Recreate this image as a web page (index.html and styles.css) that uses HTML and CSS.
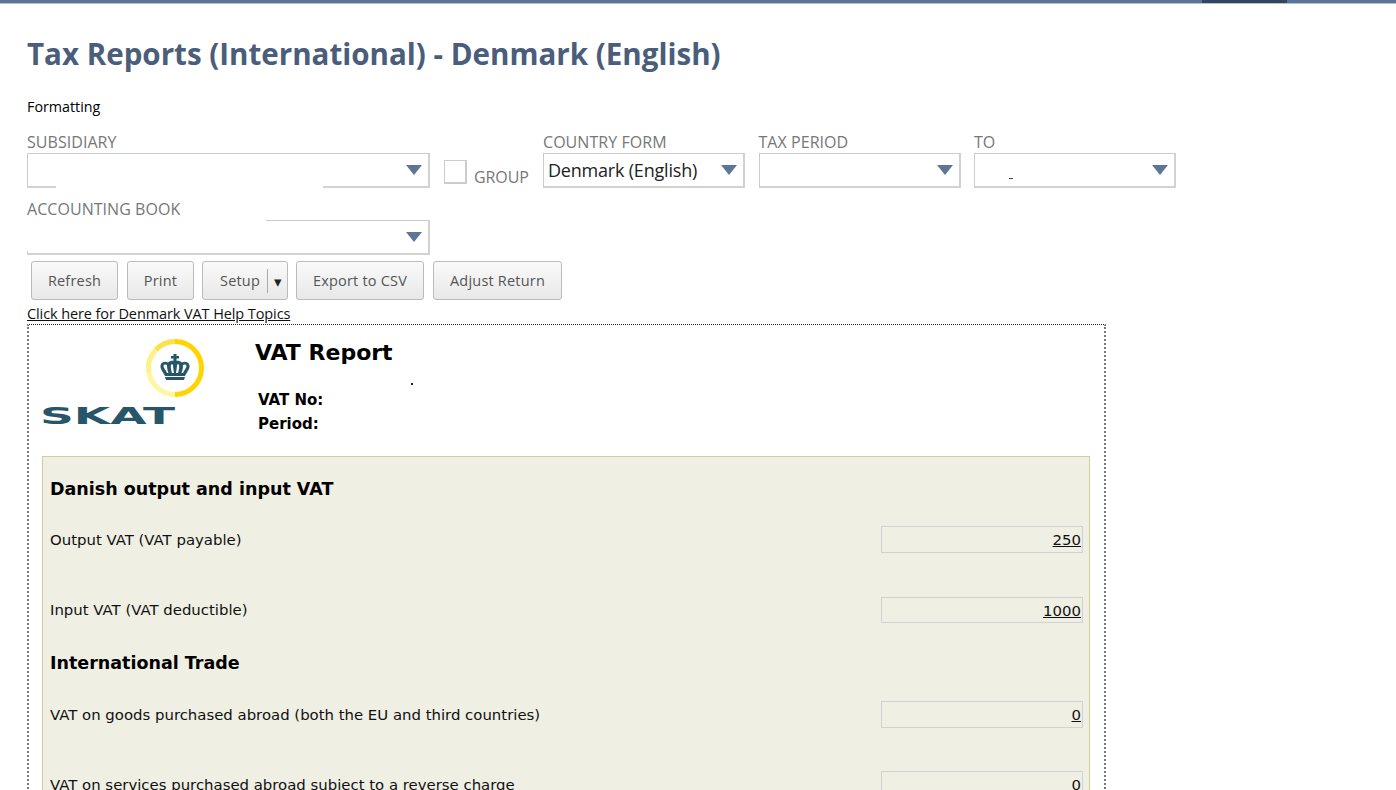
FILE: index.html
```html
<!DOCTYPE html>
<html lang="en">
<head>
    <meta charset="UTF-8">
    <meta name="viewport" content="width=device-width, initial-scale=1.0">
    <title>Tax Reports (International) - Denmark (English)</title>
    <link rel="stylesheet" href="styles.css">
</head>
<body>

<!-- top nav strip -->
<div class="topbar">
    <div class="topbar-active"></div>
</div>

<div class="page">
    <h1 class="title">Tax Reports (International) - Denmark (English)</h1>
    <div class="formatting">Formatting</div>

    <div class="filter-row">
        <div class="field field-wide">
            <label>SUBSIDIARY</label>
            <div class="select">
                <span class="mask mask-sub"></span>
                <span class="arrow"></span>
            </div>
        </div>
        <div class="group-check">
            <span class="checkbox"></span>
            <span class="group-label">GROUP</span>
        </div>
        <div class="field field-mid">
            <label>COUNTRY FORM</label>
            <div class="select">
                <span class="select-value">Denmark (English)</span>
                <span class="arrow"></span>
            </div>
        </div>
        <div class="field field-mid">
            <label>TAX PERIOD</label>
            <div class="select">
                <span class="arrow"></span>
            </div>
        </div>
        <div class="field field-mid">
            <label>TO</label>
            <div class="select">
                <span class="speck"></span>
                <span class="arrow"></span>
            </div>
        </div>
    </div>

    <div class="filter-row filter-row-2">
        <div class="field field-wide">
            <label>ACCOUNTING BOOK</label>
            <div class="select">
                <span class="mask mask-book-top"></span>
                <span class="mask mask-book-left"></span>
                <span class="arrow"></span>
            </div>
        </div>
    </div>

    <div class="buttons">
        <button class="btn btn-refresh">Refresh</button>
        <button class="btn btn-print">Print</button>
        <button class="btn btn-setup"><span class="setup-text">Setup</span><span class="setup-caret">▾</span></button>
        <button class="btn btn-export">Export to CSV</button>
        <button class="btn btn-adjust">Adjust Return</button>
    </div>

    <a class="help-link" href="#">Click here for Denmark VAT Help Topics</a>

    <div class="report">
        <div class="report-head">
            <svg class="logo" width="165" height="95" viewBox="42 335 165 95">
                <!-- ring, gold on the right fading to pale on the left -->
                <g fill="none" stroke-width="5">
                    <path d="M175 341.500 A26.500 26.500 0 0 1 175 394.500" stroke="#ffd400"/>
                    <path d="M175 394.500 A26.500 26.500 0 0 1 148.900 372.600" stroke="#fff6a0"/>
                    <path d="M148.900 372.600 A26.500 26.500 0 0 1 155.800 349.800" stroke="#fff08a"/>
                    <path d="M155.800 349.800 A26.500 26.500 0 0 1 175 341.500" stroke="#ffe04a"/>
                </g>
                <!-- crown -->
                <g fill="#27566b">
                    <rect x="173.500" y="354" width="3" height="8"/>
                    <rect x="171" y="356" width="8" height="2.500"/>
                    <path d="M165 377 L185 377 L184 380 L166 380 Z"/>
                    <path d="M165 376 C163 372 160 369 160.500 365.500 C161 362 165 361 168 362.500 C170 360.500 172 360.500 175 361 C178 360.500 180 360.500 182 362.500 C185 361 189 362 189.500 365.500 C190 369 187 372 185 376 Z"/>
                </g>
                <g fill="#fff">
                    <path d="M167 373 C166 370 163.500 368 163.500 366 C163.500 364.500 165.500 364 167 365 C167 368 167.500 370.500 168.500 373 Z"/>
                    <path d="M183 373 C184 370 186.500 368 186.500 366 C186.500 364.500 184.500 364 183 365 C183 368 182.500 370.500 181.500 373 Z"/>
                    <path d="M172 373 C171 370 170.500 367 171 364.500 L173 364.500 C173 367 173.500 370 174 373 Z"/>
                    <path d="M178 373 C179 370 179.500 367 179 364.500 L177 364.500 C177 367 176.500 370 176 373 Z"/>
                </g>
                <text class="logo-text" x="40" y="424" textLength="135" lengthAdjust="spacingAndGlyphs">SKAT</text>
            </svg>
            <div class="report-info">
                <h2 class="report-title">VAT Report</h2>
                <div class="redacted"><span class="dot"></span></div>
                <div class="meta">VAT No:</div>
                <div class="meta">Period:</div>
            </div>
        </div>

        <div class="panel">
            <h3 class="section section-first">Danish output and input VAT</h3>
            <div class="row row-a row-spaced">
                <span>Output VAT (VAT payable)</span>
                <div class="amount"><u>250</u></div>
            </div>
            <div class="row row-b">
                <span>Input VAT (VAT deductible)</span>
                <div class="amount"><u>1000</u></div>
            </div>
            <h3 class="section section-next">International Trade</h3>
            <div class="row row-a">
                <span>VAT on goods purchased abroad (both the EU and third countries)</span>
                <div class="amount"><u>0</u></div>
            </div>
            <div class="row row-a">
                <span>VAT on services purchased abroad subject to a reverse charge</span>
                <div class="amount"><u>0</u></div>
            </div>
        </div>
    </div>
</div>

</body>
</html>
```

FILE: styles.css
```css
html, body {
    margin: 0;
    padding: 0;
    height: 790px;
    overflow: hidden;
    background-color: #fff;
}

body {
    font-family: "Open Sans", Arial, sans-serif;
    color: #000;
}

.topbar {
    height: 3px;
    border-bottom: 1px solid #b4c0d2;
    background-color: #5a7397;
    display: flex;
    justify-content: flex-end;
    padding-right: 109px;
}

.topbar-active {
    width: 85px;
    background-color: #35455f;
}

.page {
    padding: 0 0 0 27px;
}

.title {
    margin: 30px 0 0;
    font-size: 29.550px;
    line-height: 40px;
    font-weight: 700;
    color: #4a5d7a;
}

.formatting {
    margin-top: 23px;
    font-size: 14.300px;
    line-height: 20px;
}

/* filter fields */
.filter-row {
    display: flex;
    margin-top: 14px;
}

.filter-row-2 {
    margin-top: 10px;
}

.field label {
    display: block;
    font-size: 16px;
    line-height: 22px;
    letter-spacing: 0.050px;
    color: #777;
    height: 22px;
}

.field-wide {
    width: 403px;
}

.field-mid {
    width: 202px;
    margin-right: 13.500px;
}

.select {
    position: relative;
    box-sizing: border-box;
    height: 35px;
    border: 2px solid #d0d0d0;
    border-width: 1px 2px 2px 1px;
    border-color: #ccc #d2d2d2 #d2d2d2 #ccc;
    background-color: #fff;
    display: flex;
    align-items: center;
}

.select-value {
    padding-left: 4px;
    font-size: 18px;
    letter-spacing: -0.200px;
    color: #222;
}

.arrow {
    position: absolute;
    right: 6px;
    top: 11px;
    width: 0;
    height: 0;
    border-left: 8.500px solid transparent;
    border-right: 8.500px solid transparent;
    border-top: 10px solid #5d7698;
}

/* blanked out areas of the screenshot */
.mask {
    position: absolute;
    background-color: #fff;
}

.mask-sub {
    left: 28px;
    bottom: -2px;
    width: 267px;
    height: 2px;
}

.mask-book-top {
    left: -1px;
    top: -1px;
    width: 239px;
    height: 2px;
}

.mask-book-left {
    left: -1px;
    top: 0;
    width: 2px;
    height: 30px;
}

.speck {
    position: absolute;
    left: 34px;
    top: 24px;
    width: 4px;
    height: 1px;
    background-color: #444;
}

.group-check {
    width: 113px;
    display: flex;
    align-items: flex-start;
    padding: 29px 0 0 14px;
    box-sizing: border-box;
}

.checkbox {
    box-sizing: border-box;
    width: 23px;
    height: 24px;
    border: 1px solid #ccc;
    border-right-width: 2px;
    border-bottom-width: 2px;
}

.group-label {
    margin: 6px 0 0 7px;
    font-size: 16px;
    line-height: 22px;
    letter-spacing: -0.100px;
    color: #777;
}

/* buttons */
.buttons {
    display: flex;
    margin: 6px 0 0 4px;
}

.btn {
    box-sizing: border-box;
    height: 39px;
    padding: 0;
    margin-right: 9px;
    border: 1px solid #bbb;
    border-radius: 3px;
    background: linear-gradient(#fafafa, #e8e8e8);
    font-family: "Open Sans", Arial, sans-serif;
    font-size: 14.500px;
    letter-spacing: 0.200px;
    color: #555;
    cursor: pointer;
}

.btn-refresh { width: 87px; }
.btn-print { width: 67px; margin-right: 8px; }
.btn-export { width: 128px; margin-right: 9px; }
.btn-adjust { width: 129px; margin-right: 0; }

.btn-setup {
    width: 86px;
    margin-right: 8px;
    display: flex;
    align-items: center;
    padding-left: 17px;
}

.setup-text {
    width: 48px;
    text-align: left;
}

.setup-caret {
    box-sizing: border-box;
    width: 20px;
    height: 24px;
    line-height: 24px;
    border-left: 1px solid #aaa;
    color: #222;
    font-size: 15px;
    text-align: center;
}

.help-link {
    display: block;
    margin-top: 4px;
    font-size: 14.500px;
    line-height: 19px;
    letter-spacing: -0.100px;
    color: #111;
}

/* report frame */
.report {
    box-sizing: border-box;
    width: 1079px;
    margin-top: 1px;
    border: 1px dotted #222;
    border-left: 2px dotted #777;
    border-right: 2px dotted #777;
    padding: 10px 14px 0 13px;
}

.report-head {
    display: flex;
    height: 121px;
}

.logo {
    flex: none;
    margin-right: 48px;
    overflow: visible;
}

.logo-text {
    font-family: "DejaVu Sans", sans-serif;
    font-size: 23px;
    font-weight: 700;
    fill: #27566b;
}

.report-info {
    font-family: "DejaVu Sans", Verdana, sans-serif;
}

.report-title {
    margin: 4px 0 0;
    font-size: 22px;
    line-height: 27px;
    font-weight: 700;
}

.redacted {
    height: 22px;
    position: relative;
}

.dot {
    position: absolute;
    left: 156px;
    top: 17px;
    width: 2px;
    height: 2px;
    background-color: #222;
}

.meta {
    padding-left: 3px;
    font-size: 15px;
    line-height: 24px;
    font-weight: 700;
}

/* beige panel */
.panel {
    box-sizing: border-box;
    height: 420px;
    border: 1px solid #d4cc9c;
    background-color: #efefe4;
    padding: 21px 6px 0 7px;
    font-family: "DejaVu Sans", Verdana, sans-serif;
    font-size: 14.900px;
}

.section {
    margin: 0;
    font-size: 17.500px;
    line-height: 22px;
    font-weight: 700;
}

.section-first {
    margin-bottom: 26px;
}

.section-next {
    margin-top: 29px;
    margin-bottom: 27px;
}

.row {
    display: flex;
    justify-content: space-between;
    align-items: center;
    color: #111;
}

.row-a {
    height: 27px;
    margin-bottom: 43px;
}

.row-spaced {
    margin-bottom: 44px;
}

.row-b {
    height: 26px;
}

.amount {
    box-sizing: border-box;
    width: 202px;
    height: 100%;
    border: 1px solid #d2d2d2;
    padding-right: 1px;
    text-align: right;
    line-height: 26px;
}
```
